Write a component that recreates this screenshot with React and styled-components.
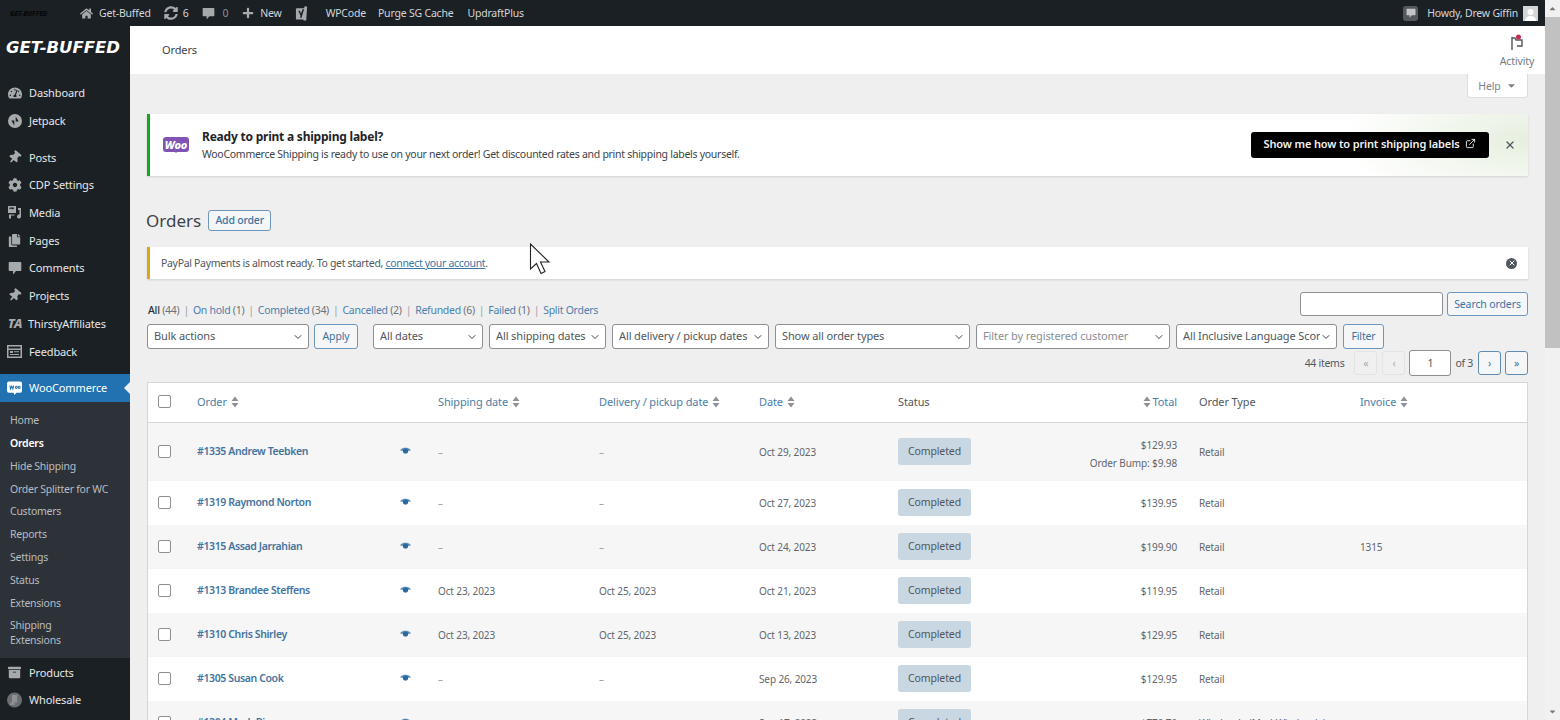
import React from 'react';
import styled, { createGlobalStyle } from 'styled-components';
import { ChevronDown, X, ExternalLink } from 'lucide-react';
import { FaHome, FaSyncAlt, FaPlus, FaThumbtack, FaCog, FaCopy, FaArchive, FaTachometerAlt, FaCaretDown, FaCaretUp } from 'react-icons/fa';

const Global = createGlobalStyle`
  html, body { margin: 0; padding: 0; height: 720px; overflow: hidden; background: #efefef; }
  * { box-sizing: border-box; }
  body { font-family: "Noto Sans", "Open Sans", sans-serif; font-size: 10.5px; color: #50575e; letter-spacing: -0.12px; }
`;

const Frame = styled.div`display: flex; width: 1560px; height: 720px; overflow: hidden; position: relative;`;
const Page = styled.div`width: 1545px; display: flex; flex-direction: column; flex: none;`;

const ScrollTrack = styled.div`width: 15px; background: #f1f1f1; display: flex; flex-direction: column; align-items: center; color: #777;`;
const ScrollArrow = styled.div`height: 17px; display: flex; align-items: center; justify-content: center; flex: none;`;
const ScrollThumb = styled.div`width: 15px; height: 331px; background: #c1c1c1; flex: none;`;
const ScrollSpace = styled.div`flex: 1;`;

const AdminBar = styled.div`
  height: 26px; background: #1b2025; display: flex; align-items: center; color: #d4d6d8; font-size: 10.5px; flex: none; padding-left: 10px; letter-spacing: -0.2px;
`;
const BarLogo = styled.span`font-size: 6.5px; font-weight: 800; font-style: italic; color: #050607; width: 70px; letter-spacing: 0;`;
const BarItem = styled.span`display: inline-flex; align-items: center; gap: ${p => p.$gap ?? 5}px; margin-right: ${p => p.$mr ?? 12}px; color: ${p => p.$dim ? '#8d9196' : '#d4d6d8'}; svg { color: #a7aaad; flex: none; }`;
const BarSpacer = styled.div`flex: 1;`;
const BarNotice = styled.span`width: 15px; height: 15px; border-radius: 3px; background: #55595d; display: flex; align-items: center; justify-content: center; margin-right: 9px; svg { color: #c3c4c7; }`;
const Avatar = styled.span`width: 15px; height: 15px; background: #d4d5d6; margin: 0 7px 0 5px; display: flex; overflow: hidden;`;

const Body = styled.div`flex: 1; display: flex; min-height: 0;`;

const Sidebar = styled.nav`width: 130px; flex: none; background: #1b2025; color: #e3e4e5; display: flex; flex-direction: column; overflow: hidden;`;
const Brand = styled.div`height: 53px; padding: 11px 0 0 6px; color: #fff; font-family: "DejaVu Sans", sans-serif; font-size: 16.5px; line-height: 22px; font-weight: 800; font-style: italic; letter-spacing: 0; white-space: nowrap;`;
const MenuGroup = styled.div`margin-bottom: ${p => p.$mb ?? 9}px; flex: none;`;
const MenuItem = styled.div`
  height: 27.7px; display: flex; align-items: center; padding-left: 7px; font-size: 11px; color: #e6e7e8; position: relative;
  background: ${p => p.$active ? '#2271b1' : 'transparent'};
  ${p => p.$active && 'color: #fff; height: 28px;'}
`;
const MenuIcon = styled.span`width: 15px; height: 15px; margin-right: 7px; display: flex; align-items: center; justify-content: center; color: #a7aaad; flex: none;`;
const TaIcon = styled.span`width: 18px; margin: 0 4px 0 -1px; color: #a7aaad; flex: none; font-size: 13px; font-weight: 800; font-style: italic; text-align: center;`;
const TiltedPin = styled(FaThumbtack)`transform: rotate(40deg);`;
const ActiveNotch = styled.span`position: absolute; right: 0; top: 8px; width: 0; height: 0; border: 6px solid transparent; border-right-color: #efefef; border-left-width: 0;`;
const SubMenu = styled.div`background: #2c3238; padding: 7.5px 0 6px; flex: none;`;
const SubItem = styled.div`line-height: 15px; padding: 3.9px 0 3.9px 10px; font-size: 10.5px; letter-spacing: -0.25px; white-space: pre; color: ${p => p.$cur ? '#fff' : '#b9bcc0'}; font-weight: ${p => p.$cur ? 600 : 400};`;

const Main = styled.main`flex: 1; min-width: 0; display: flex; flex-direction: column; position: relative;`;
const TopHeader = styled.header`height: 48px; background: #fff; display: flex; align-items: center; justify-content: space-between; padding-left: 32px; flex: none; color: #3c434a; font-size: 11px;`;
const HeaderTitle = styled.span`margin-bottom: 2px;`;
const ActivityBtn = styled.div`width: 56px; display: flex; flex-direction: column; align-items: center; gap: 2px; color: #757a80; font-size: 10.5px; padding-top: 2px;`;
const Content = styled.div`padding: 0 17px; flex: 1; min-height: 0; display: flex; flex-direction: column; letter-spacing: -0.28px;`;
const HelpRow = styled.div`display: flex; justify-content: flex-end; height: 40px; flex: none;`;
const HelpTab = styled.div`width: 61px; height: 24px; background: #fff; border: 1px solid #dcdcde; border-top: 0; border-radius: 0 0 4px 4px; display: flex; align-items: center; justify-content: center; gap: 5px; color: #7d8287; font-size: 10.5px; letter-spacing: -0.12px;`;

const ShipNotice = styled.div`
  height: 62px; flex: none; border-left: 3px solid #13a81f; display: flex; align-items: center;
  background: radial-gradient(ellipse 190px 70px at 100% 40%, #e6efdf 0%, rgba(255,255,255,0) 100%), #fff;
  box-shadow: 0 1px 2px rgba(0,0,0,.12); padding-left: 13px;
`;
const WooBadge = styled.div`width: 26px; height: 15px; background: #7f54b3; border-radius: 3px; color: #fff; font-size: 11px; font-weight: 800; line-height: 15px; text-align: center; margin-right: 13px; position: relative; flex: none; font-style: italic; letter-spacing: -0.2px; margin-top: -2px;
  &::after { content: ''; position: absolute; left: 11px; bottom: -3px; border: 2px solid transparent; border-top-color: #7f54b3; }`;
const ShipText = styled.div`flex: 1; min-width: 0; padding-bottom: 1px;`;
const ShipTitle = styled.div`font-size: 12px; font-weight: 700; color: #1d2327; line-height: 17px; letter-spacing: -0.22px;`;
const ShipDesc = styled.div`font-size: 10.5px; color: #3c434a; line-height: 16px; margin-top: 1px;`;
const BlackBtn = styled.div`width: 238px; height: 26px; background: #000; color: #f2f2f2; border-radius: 3px; display: flex; align-items: center; justify-content: center; gap: 6px; font-size: 11px; font-weight: 600; margin-right: 3px; padding-bottom: 3px; letter-spacing: -0.14px;`;
const CloseWrap = styled.div`width: 36px; display: flex; justify-content: center; color: #50575e;`;

const Heading = styled.div`display: flex; align-items: center; height: 71px; flex: none; gap: 7px; padding-top: 17px; margin-left: -1px;`;
const H1 = styled.h1`font-size: 17px; font-weight: 400; margin: 0; color: #3c434a; letter-spacing: 0;`;
const OutlineBtn = styled.div`
  height: ${p => p.$h ?? 25}px; width: ${p => p.$w}px; padding: 0 0 1px; border: 1px solid #6b97bd; border-radius: 3px; background: #f5f6f7; color: #40739f;
  display: inline-flex; align-items: center; justify-content: center; font-size: 10.5px; flex: none; white-space: nowrap; letter-spacing: -0.12px;
  margin-left: ${p => p.$ml ?? 0}px; margin-right: ${p => p.$mr ?? 0}px;
`;
const AddBtn = styled(OutlineBtn)`font-weight: 500; letter-spacing: -0.2px;`;
const FilterBtn = styled(OutlineBtn)`padding-bottom: 2px;`;

const PayPal = styled.div`height: 32px; flex: none; background: #fff; border-left: 3px solid #dba617; box-shadow: 0 1px 2px rgba(0,0,0,.12); display: flex; align-items: center; justify-content: space-between; padding: 0 11px 0 11px; font-size: 10.5px; letter-spacing: -0.32px; color: #50575e; a { color: #3a75a6; text-decoration: underline; }`;
const CircleX = styled.span`width: 11px; height: 11px; border-radius: 50%; background: #50575e; color: #fff; display: flex; align-items: center; justify-content: center;`;

const LinksRow = styled.div`display: flex; justify-content: space-between; align-items: flex-end; margin-top: 13px; flex: none; height: 24px;`;
const Links = styled.div`display: flex; gap: 4px; padding-left: 1px; font-size: 10.5px; color: #7f8489; line-height: 14px; margin-bottom: -1px;`;
const LinkA = styled.span`color: ${p => p.$cur ? '#2c3338' : '#4b80ad'}; font-weight: ${p => p.$cur ? 500 : 400};`;
const Count = styled.span`color: #6d7277;`;
const Sep = styled.span`color: #9a9fa4;`;
const SearchBox = styled.div`display: flex; gap: 4px;`;
const TextInput = styled.div`width: ${p => p.$w}px; height: ${p => p.$h ?? 24}px; margin-left: ${p => p.$ml ?? 0}px; background: #fff; border: 1px solid #8c8f94; border-radius: 3px; display: flex; align-items: center; justify-content: center; color: #50575e;`;

const FilterRow = styled.div`display: flex; gap: 6px; margin-top: 8px; height: 25px; flex: none;`;
const Select = styled.div`
  width: ${p => p.$w}px; height: 25px; background: #fff; border: 1px solid #8c8f94; border-radius: 3px; display: flex; align-items: center; justify-content: space-between; padding: 0 4px 2px 6px; font-size: 11px; letter-spacing: -0.12px; color: ${p => p.$ph ? '#8a8e93' : '#50575e'}; flex: none;
  span { overflow: hidden; white-space: nowrap; flex: 1; }
  svg { flex: none; color: #3c434a; margin-top: 2px; }
`;
const PagerRow = styled.div`display: flex; justify-content: flex-end; align-items: center; margin-top: 1px; height: 26px; flex: none; color: #50575e; font-size: 10.5px;`;
const PageBtn = styled.div`width: 23px; height: 24px; border: 1px solid ${p => p.$off ? '#e2e3e4' : '#5d8db5'}; border-radius: 3px; background: ${p => p.$off ? '#f0f0f1' : '#f5f6f7'}; color: ${p => p.$off ? '#a7aaad' : '#3d75a3'}; display: flex; align-items: center; justify-content: center; margin-left: ${p => p.$ml ?? 4}px; font-size: 10.5px;`;
const PagerText = styled.span`margin-left: ${p => p.$ml ?? 0}px; margin-right: ${p => p.$mr ?? 0}px;`;

const Table = styled.div`margin-top: 6px; background: #fff; border: 1px solid #d5d6d8; border-bottom: 0; flex: none; letter-spacing: -0.12px;`;
const Grid = `display: grid; grid-template-columns: 49px 192px 49px 161px 160px 139px 150px 129px 22px 161px 1fr; align-items: center;`;
const HeadRow = styled.div`${Grid} height: 40px; border-bottom: 1px solid #d5d6d8; padding-bottom: 2px;`;
const Row = styled.div`${Grid} height: ${p => p.$h}px; background: ${p => p.$alt ? '#f6f6f7' : '#fff'}; font-size: 10px; color: #60666c;`;
const CheckCell = styled.div`padding-left: 10px; display: flex; margin-top: ${p => p.$head ? 0 : -2}px;`;
const CheckBox = styled.div`width: 13px; height: 13px; background: #fff; border: 1px solid #8c8f94; border-radius: 2px;`;
const HeadLink = styled.div`display: flex; align-items: center; gap: 4px; font-size: 11px; color: ${p => p.$plain ? '#50575e' : '#4b7ea8'}; white-space: nowrap; justify-content: ${p => p.$end ? 'flex-end' : 'flex-start'};`;
const TightLabel = styled.span`margin-left: -2px;`;
const OrderName = styled.div`color: #44749f; font-size: 10.5px; font-weight: 600; letter-spacing: -0.38px; white-space: nowrap; margin-top: -2px;`;
const EyeCell = styled.div`padding-left: 11px; color: #2b6a9f; display: flex; margin-top: -2px;`;
const DateCell = styled.div`color: ${p => p.$dash ? '#9da1a5' : 'inherit'};`;
const BadgeCell = styled.div`margin-top: -2px;`;
const Badge = styled.div`width: 73px; height: 27px; background: #c8d7e1; border-radius: 3px; color: #4f565c; display: flex; align-items: center; justify-content: center; font-size: 10.5px;`;
const TotalCell = styled.div`text-align: right; line-height: 18px; font-size: 10px; padding-top: ${p => p.$two ? 4 : 0}px;`;

const Cursor = styled.svg`position: absolute; left: 399px; top: 217px; width: 23px; height: 32px; z-index: 5;`;

function SortIcon() {
  return (
    <svg width="8" height="12" viewBox="0 0 8 12" fill="#8c9196">
      <path d="M4 0.5 7.5 5H.5zM4 11.5.5 7h7z" />
    </svg>
  );
}

const CommentIcon = ({ size = 14 }) => (
  <svg width={size} height={size} viewBox="0 0 14 14" fill="currentColor">
    <path d="M1.500 1h11a.8.8 0 0 1 .8.8v7.400a.8.8 0 0 1-.8.8H8L5 13.500V10H1.500a.8.8 0 0 1-.8-.8V1.800a.8.8 0 0 1 .8-.8z" />
  </svg>
);
const EyeIcon = () => (
  <svg width="11" height="8" viewBox="0 0 11 8" fill="currentColor">
    <path opacity=".75" d="M0 3.200C1.600 1.400 3.500.8 5.500.8s3.900.6 5.500 2.400C9.500 3.800 8.200 4 7.500 4h-4C2.800 4 1.500 3.800 0 3.200z" />
    <circle cx="5.500" cy="4" r="2.600" />
  </svg>
);
const MediaIcon = () => (
  <svg width="15" height="15" viewBox="0 0 15 15" fill="currentColor">
    <path d="M1 1h8v7H1zM2.500 2.500v2l1.500-1 1.500 1 1.500-1V2.500zM11 3h3v8.500a2 2 0 1 1-1.500-1.900V5H11zM2 9.500h5.500v1H4v3H2z" />
  </svg>
);
const JetpackIcon = () => (
  <svg width="14" height="14" viewBox="0 0 14 14" fill="currentColor">
    <path fillRule="evenodd" d="M7 0a7 7 0 1 1 0 14A7 7 0 0 1 7 0zM7.700 2.500v5h3zM6.300 11.500v-5h-3z" />
  </svg>
);
const FeedbackIcon = () => (
  <svg width="15" height="13" viewBox="0 0 15 13" fill="currentColor">
    <path fillRule="evenodd" d="M0 0h15v13H0zM1.500 1.500v2h12v-2zM1.500 5v6.500h12V5zM3 6h3v2H3zM7 6.300h5v1H7zM3 9h9v1H3z" />
  </svg>
);
const WooSide = () => (
  <svg width="16" height="16" viewBox="0 0 16 16">
    <path fill="#fff" d="M2 1h12a2 2 0 0 1 2 2v8a2 2 0 0 1-2 2h-4l-2 2.500L7 13H2a2 2 0 0 1-2-2V3a2 2 0 0 1 2-2z" />
    <path fill="none" stroke="#2271b1" strokeWidth="1.100" d="M3 5.500l.8 3.500 1.300-3 1.200 3 .9-3.500M9 7.300a1 1.200 0 1 0 2 0 1 1.200 0 1 0-2 0M12 7.300a1 1.200 0 1 0 2 0 1 1.200 0 1 0-2 0" />
  </svg>
);
const WholesaleIcon = () => (
  <svg width="18" height="18" viewBox="0 0 18 18">
    <circle cx="9" cy="9" r="9" fill="#6c6f72" />
    <path fill="#8f9194" d="M6 3h6v9H9v3H4v-3h2z" />
  </svg>
);
const YoastIcon = () => (
  <svg width="14" height="17" viewBox="0 0 15 17">
    <path fill="#a7aaad" d="M2 3h9v12H2a1 1 0 0 1-1-1V4a1 1 0 0 1 1-1z" />
    <path fill="#a7aaad" d="M10 1l3 0-1 15-3 0z" />
    <path fill="#1b2025" d="M3.500 5.500h1.700l1.300 3 1.600-4.500h1.600L7 13H5.300l.7-2.200z" />
  </svg>
);
const FlagIcon = () => (
  <svg width="18" height="18" viewBox="0 0 18 18" fill="none">
    <path stroke="#555" strokeWidth="1.400" d="M4 3v13M4 4h3l1 2h6v6H9" />
    <circle cx="10.500" cy="3" r="2.500" fill="#c9294f" />
  </svg>
);

const menuTop = [
  { t: 'Dashboard', i: <FaTachometerAlt size={14} /> },
  { t: 'Jetpack', i: <JetpackIcon /> },
];
const menuMid = [
  { t: 'Posts', i: <TiltedPin size={13} /> },
  { t: 'CDP Settings', i: <FaCog size={14} /> },
  { t: 'Media', i: <MediaIcon /> },
  { t: 'Pages', i: <FaCopy size={13} /> },
  { t: 'Comments', i: <CommentIcon /> },
  { t: 'Projects', i: <TiltedPin size={13} /> },
  { t: 'ThirstyAffiliates', ta: true },
  { t: 'Feedback', i: <FeedbackIcon /> },
];
const subs = ['Home', 'Orders', 'Hide Shipping', 'Order Splitter for WC', 'Customers', 'Reports', 'Settings', 'Status', 'Extensions', 'Shipping\nExtensions'];

const filters = [
  ['All', '(44)', true], ['On hold', '(1)'], ['Completed', '(34)'], ['Cancelled', '(2)'], ['Refunded', '(6)'], ['Failed', '(1)'], ['Split Orders', ''],
];

const orders = [
  { h: 58, alt: true, n: '#1335 Andrew Teebken', s: '–', d: '–', o: 'Oct 29, 2023', t: '$129.93', b: 'Order Bump: $9.98', ty: 'Retail' },
  { h: 44, n: '#1319 Raymond Norton', s: '–', d: '–', o: 'Oct 27, 2023', t: '$139.95', ty: 'Retail' },
  { h: 44, alt: true, n: '#1315 Assad Jarrahian', s: '–', d: '–', o: 'Oct 24, 2023', t: '$199.90', ty: 'Retail', inv: '1315' },
  { h: 44, n: '#1313 Brandee Steffens', s: 'Oct 23, 2023', d: 'Oct 25, 2023', o: 'Oct 21, 2023', t: '$119.95', ty: 'Retail' },
  { h: 44, alt: true, n: '#1310 Chris Shirley', s: 'Oct 23, 2023', d: 'Oct 25, 2023', o: 'Oct 13, 2023', t: '$129.95', ty: 'Retail' },
  { h: 44, n: '#1305 Susan Cook', s: '–', d: '–', o: 'Sep 26, 2023', t: '$129.95', ty: 'Retail' },
  { h: 44, alt: true, n: '#1304 Mark Biss', s: '–', d: '–', o: 'Sep 17, 2023', t: '$770.70', ty: 'Wholesale (Mod-Wholesale)' },
];

export default function App() {
  return (
    <Frame>
      <Global />
      <Page>
        <AdminBar>
          <BarLogo>GET-BUFFED</BarLogo>
          <BarItem $gap={6} $mr={13}><FaHome size={13} />Get-Buffed</BarItem>
          <BarItem $mr={14}><FaSyncAlt size={14} />6</BarItem>
          <BarItem $mr={14} $gap={7} $dim><CommentIcon size={13} />0</BarItem>
          <BarItem $mr={13} $gap={6}><FaPlus size={12} />New</BarItem>
          <BarItem $mr={17}><YoastIcon /></BarItem>
          <BarItem>WPCode</BarItem>
          <BarItem $mr={14}>Purge SG Cache</BarItem>
          <BarItem>UpdraftPlus</BarItem>
          <BarSpacer />
          <BarNotice><CommentIcon size={10} /></BarNotice>
          <span>Howdy, Drew Giffin</span>
          <Avatar>
            <svg width="15" height="15" viewBox="0 0 15 15"><circle cx="7.500" cy="6" r="3" fill="#fff" /><path fill="#fff" d="M2 15c0-4 3-5 5.500-5s5.500 1 5.500 5z" /></svg>
          </Avatar>
        </AdminBar>
        <Body>
          <Sidebar>
            <Brand>GET-BUFFED</Brand>
            <MenuGroup>
              {menuTop.map(m => <MenuItem key={m.t}><MenuIcon>{m.i}</MenuIcon>{m.t}</MenuItem>)}
            </MenuGroup>
            <MenuGroup>
              {menuMid.map(m => <MenuItem key={m.t}>{m.ta ? <TaIcon>TA</TaIcon> : <MenuIcon>{m.i}</MenuIcon>}{m.t}</MenuItem>)}
            </MenuGroup>
            <MenuItem $active><MenuIcon><WooSide /></MenuIcon>WooCommerce<ActiveNotch /></MenuItem>
            <SubMenu>
              {subs.map(s => <SubItem key={s} $cur={s === 'Orders'}>{s}</SubItem>)}
            </SubMenu>
            <MenuItem><MenuIcon><FaArchive size={13} /></MenuIcon>Products</MenuItem>
            <MenuItem><MenuIcon><WholesaleIcon /></MenuIcon>Wholesale</MenuItem>
          </Sidebar>
          <Main>
            <TopHeader>
              <HeaderTitle>Orders</HeaderTitle>
              <ActivityBtn><FlagIcon />Activity</ActivityBtn>
            </TopHeader>
            <Content>
              <HelpRow><HelpTab>Help <FaCaretDown size={11} /></HelpTab></HelpRow>
              <ShipNotice>
                <WooBadge>Woo</WooBadge>
                <ShipText>
                  <ShipTitle>Ready to print a shipping label?</ShipTitle>
                  <ShipDesc>WooCommerce Shipping is ready to use on your next order! Get discounted rates and print shipping labels yourself.</ShipDesc>
                </ShipText>
                <BlackBtn>Show me how to print shipping labels <ExternalLink size={11} /></BlackBtn>
                <CloseWrap><X size={12} strokeWidth={2.5} /></CloseWrap>
              </ShipNotice>
              <Heading>
                <H1>Orders</H1>
                <AddBtn $h={21} $w={63}>Add order</AddBtn>
              </Heading>
              <PayPal>
                <span>PayPal Payments is almost ready. To get started, <a>connect your account</a>.</span>
                <CircleX><X size={8} strokeWidth={3} /></CircleX>
              </PayPal>
              <LinksRow>
                <Links>
                  {filters.map(([l, c, cur], i) => (
                    <React.Fragment key={l}>
                      {i > 0 && <Sep>|</Sep>}
                      <span><LinkA $cur={cur}>{l}</LinkA> <Count>{c}</Count></span>
                    </React.Fragment>
                  ))}
                </Links>
                <SearchBox>
                  <TextInput $w={143} />
                  <OutlineBtn $h={24} $w={81}>Search orders</OutlineBtn>
                </SearchBox>
              </LinksRow>
              <FilterRow>
                <Select $w={162}><span>Bulk actions</span><ChevronDown size={12} /></Select>
                <FilterBtn $h={25} $w={44} $ml={-1} $mr={9}>Apply</FilterBtn>
                <Select $w={110}><span>All dates</span><ChevronDown size={12} /></Select>
                <Select $w={117}><span>All shipping dates</span><ChevronDown size={12} /></Select>
                <Select $w={157}><span>All delivery / pickup dates</span><ChevronDown size={12} /></Select>
                <Select $w={195}><span>Show all order types</span><ChevronDown size={12} /></Select>
                <Select $w={194} $ph><span>Filter by registered customer</span><ChevronDown size={12} /></Select>
                <Select $w={161}><span>All Inclusive Language Scores</span><ChevronDown size={12} /></Select>
                <FilterBtn $h={25} $w={41}>Filter</FilterBtn>
              </FilterRow>
              <PagerRow>
                <PagerText $mr={10}>44 items</PagerText>
                <PageBtn $off $ml={0}>«</PageBtn>
                <PageBtn $off $ml={5}>‹</PageBtn>
                <TextInput $w={42} $h={26} $ml={4}>1</TextInput>
                <PagerText $ml={4}>of 3</PagerText>
                <PageBtn $ml={5}>›</PageBtn>
                <PageBtn>»</PageBtn>
              </PagerRow>
              <Table>
                <HeadRow>
                  <CheckCell $head><CheckBox /></CheckCell>
                  <HeadLink>Order <SortIcon /></HeadLink>
                  <div />
                  <HeadLink>Shipping date <SortIcon /></HeadLink>
                  <HeadLink>Delivery / pickup date <SortIcon /></HeadLink>
                  <HeadLink>Date <SortIcon /></HeadLink>
                  <HeadLink $plain>Status</HeadLink>
                  <HeadLink $end><SortIcon /><TightLabel>Total</TightLabel></HeadLink>
                  <div />
                  <HeadLink $plain>Order Type</HeadLink>
                  <HeadLink>Invoice <SortIcon /></HeadLink>
                </HeadRow>
                {orders.map(o => (
                  <Row key={o.n} $h={o.h} $alt={o.alt}>
                    <CheckCell><CheckBox /></CheckCell>
                    <OrderName>{o.n}</OrderName>
                    <EyeCell><EyeIcon /></EyeCell>
                    <DateCell $dash={o.s === '–'}>{o.s}</DateCell>
                    <DateCell $dash={o.d === '–'}>{o.d}</DateCell>
                    <DateCell>{o.o}</DateCell>
                    <BadgeCell><Badge>Completed</Badge></BadgeCell>
                    <TotalCell $two={!!o.b}>{o.t}{o.b && <><br />{o.b}</>}</TotalCell>
                    <div />
                    <div>{o.ty}</div>
                    <div>{o.inv}</div>
                  </Row>
                ))}
              </Table>
            </Content>
            <Cursor viewBox="0 0 23 32">
              <path d="M1.500 1 V26 L7.500 20.500 L12 30.500 L16 28.500 L11.500 19 H20 Z" fill="#fff" stroke="#222" strokeWidth="1.100" />
            </Cursor>
          </Main>
        </Body>
      </Page>
      <ScrollTrack>
        <ScrollArrow><FaCaretUp size={9} /></ScrollArrow>
        <ScrollThumb />
        <ScrollSpace />
        <ScrollArrow><FaCaretDown size={9} /></ScrollArrow>
      </ScrollTrack>
    </Frame>
  );
}
